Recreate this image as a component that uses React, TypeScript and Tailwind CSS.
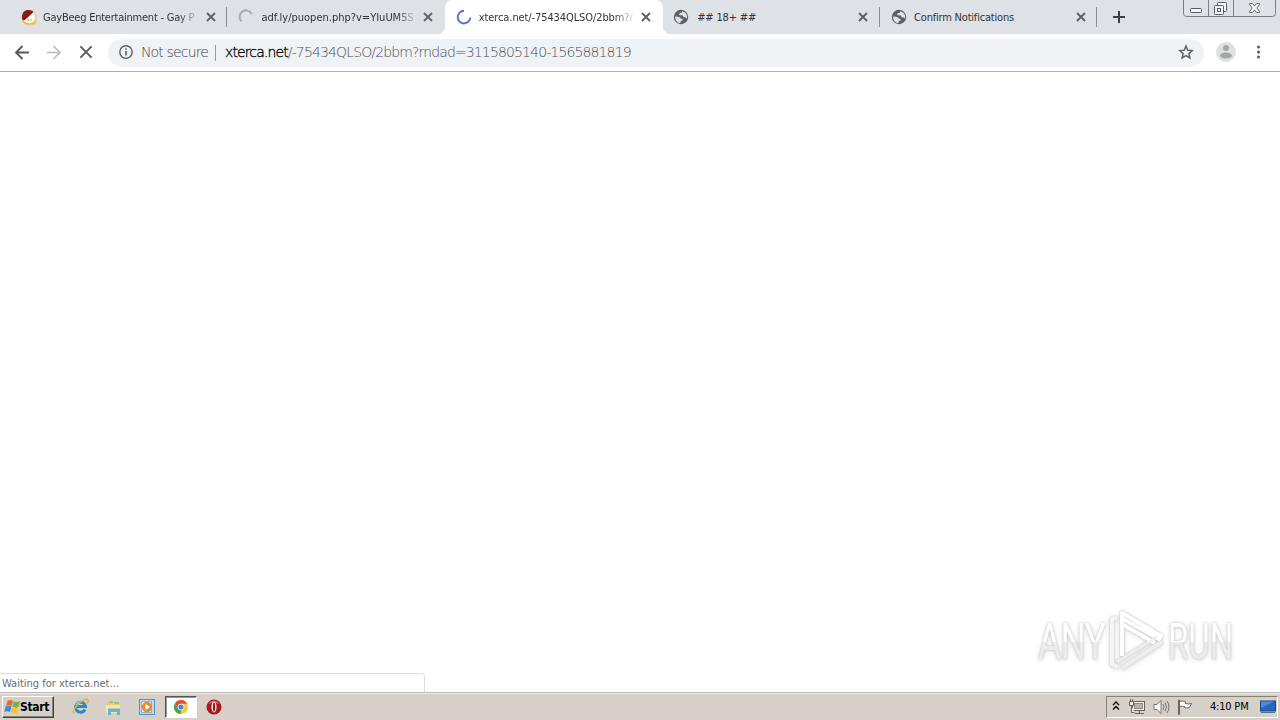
import type { ReactNode } from 'react'
import clsx from 'clsx'

const tabs = [
  { title: 'GayBeeg Entertainment - Gay P', icon: <CapIcon />, fade: true, track: 'tracking-[-0.23px] -ml-px' },
  { title: 'adf.ly/puopen.php?v=YIuUM5S', icon: <Spinner color="#a9abae" arc="M3.5 12.2A6.3 6.3 0 1 1 13.600 5" />, fade: true, track: 'tracking-[0px]' },
  { title: 'xterca.net/-75434QLSO/2bbm?r', icon: <Spinner color="#5673d0" arc="M8 1.8A6.3 6.3 0 1 0 14.3 8.6" />, fade: true, active: true, track: 'tracking-[-0.1px]' },
  { title: '## 18+ ##', icon: <GlobeIcon />, track: 'tracking-[-0.15px] pl-px' },
  { title: 'Confirm Notifications', icon: <GlobeIcon />, track: 'tracking-[-0.2px] pl-[0.5px]' },
]

function Spinner({ color, arc }: { color: string; arc: string }) {
  return (
    <svg width="16" height="16" viewBox="0 0 16 16" fill="none" stroke={color} strokeWidth="2">
      <path d={arc} />
    </svg>
  )
}

function CapIcon() {
  return (
    <svg width="16" height="16" viewBox="0 0 16 16">
      <path d="M6 1h6l3.500 5v7.500q0 2-2 2H3z" fill="#f3c765" />
      <circle cx="7.500" cy="8" r="6.600" fill="#fff0ce" />
      <path d="M1.500 11.500C-.5 5 3 1 7.500 1q3.500 0 5 2L4 11z" fill="#861a1c" />
      <path d="M3.500 11.500L13 4q2.500 4-.5 8-4.500 2.500-9-.5" fill="#fff" />
      <path d="M1.500 11q1.500 4 6 4l6-.5" fill="none" stroke="#f1bb4d" strokeWidth="1.600" />
      <path d="M7 11h1.200M9.500 11h1.200" stroke="#8e5151" />
    </svg>
  )
}

function GlobeIcon() {
  return (
    <svg width="16" height="16" viewBox="0 0 16 16">
      <circle cx="8" cy="8" r="7.200" fill="#5c6066" />
      <path d="M2.300 7.300l4.500 1 1.200 1.500H9.500v1.600l-2 1v1.700C4 14 1.700 11 2.300 7.300z" fill="#dee1e6" />
      <path d="M9 2.300v1.200L6.300 4.600v1.600H9.500l1.200 2h1.500l1.800 1.300c.7-3-1-6.500-5-7.200z" fill="#dee1e6" />
    </svg>
  )
}

function Cross({ size, stroke, width }: { size: number; stroke: string; width: number }) {
  return (
    <svg width={size} height={size} viewBox="0 0 10 10" fill="none" stroke={stroke} strokeWidth={width}>
      <path d="M1 1l8 8M9 1L1 9" />
    </svg>
  )
}

function TabStrip() {
  return (
    <div className="relative flex h-[34px] bg-[#dee1e6] pl-[10px]">
      {tabs.map((tab, i) => (
        <div
          key={tab.title}
          className={clsx(
            'relative flex h-[34px] w-[217.4px] shrink-0 items-center pl-[11px]',
            tab.active && 'rounded-t-lg bg-white shadow-[1px_0_0_#fff]',
          )}
        >
          <div className="w-4 shrink-0">{tab.icon}</div>
          <div className="ml-[7px] w-[154px]">
            <div
              className={clsx(
                'w-[154px] whitespace-nowrap pt-px text-[11px] leading-4 text-[#303338]',
                tab.track,
                tab.fade && '[mask-image:linear-gradient(to_right,#000_88%,transparent_102%)]',
              )}
            >
              {tab.title}
            </div>
          </div>
          <div className="ml-[8px]">
            <Cross size={10} stroke="#5f6368" width={1.9} />
          </div>
          {i !== 1 && i !== 2 && <div className="absolute right-0 top-[7px] h-5 w-px bg-[#8b8f95]" />}
          {tab.active && (
            <>
              <div className="absolute -left-2 bottom-0 size-2 bg-[radial-gradient(circle_at_0_0,transparent_8px,#fff_8.500px)]" />
              <div className="absolute -right-[9px] bottom-0 size-2 bg-[radial-gradient(circle_at_100%_0,transparent_8px,#fff_8.500px)]" />
            </>
          )}
        </div>
      ))}
      <svg className="ml-[16px] mt-[11px]" width="12" height="12" viewBox="0 0 12 12">
        <path d="M6 0v12M0 6h12" stroke="#3c4045" strokeWidth="2" />
      </svg>
      <WindowButtons />
    </div>
  )
}

function WindowButtons() {
  return (
    <svg className="absolute left-[1183px] top-0" width="94" height="18" fill="none" stroke="#7b7f88">
      <path d="M.5 0v13.500q0 3 3 3h86q3 0 3-3V0M25.500 0v16M50.500 0v16" />
      <rect x="7.500" y="8.500" width="11" height="4" rx="1" fill="#f4f5f7" stroke="#555a65" />
      <g stroke="#555a65" fill="#f4f5f7">
        <rect x="34.500" y="2.500" width="9" height="9" rx="1" />
        <rect x="31.500" y="5.500" width="9" height="9" rx="1" />
        <rect x="34.500" y="8.500" width="3" height="3" />
        <path d="M66.500 3.500h3l2 2.500 2-2.500h3v1l-2.700 3.500 2.700 3.500v1h-3l-2-2.500-2 2.500h-3v-1l2.700-3.500-2.700-3.500z" strokeWidth=".9" />
      </g>
    </svg>
  )
}

function Toolbar() {
  return (
    <div className="flex h-[38px] items-center border-b border-[#afafaf] bg-white pl-[14px]">
      <svg width="16" height="16" viewBox="0 0 16 16" fill="none" stroke="#55585c" strokeWidth="1.800">
        <path d="M15 7.500H2M8.500 1L2 7.500 8.500 14" />
      </svg>
      <svg className="ml-4" width="16" height="16" viewBox="0 0 16 16" fill="none" stroke="#b9bbbd" strokeWidth="1.600">
        <path d="M1 7.500h13M7.500 1L14 7.500 7.500 14" />
      </svg>
      <div className="mb-px ml-[17px]">
        <Cross size={14} stroke="#55585c" width={1.3} />
      </div>
      <div className="ml-[15px] flex h-7 w-[1096px] items-center rounded-full bg-[#f0f3f5] pl-[11px] font-['DejaVu_Sans_Light','DejaVu_Sans'] text-[14px] font-extralight">
        <svg className="mb-px" width="14" height="14" viewBox="0 0 14 14" fill="none" stroke="#5f6368" strokeWidth="1.400">
          <circle cx="7" cy="7" r="6.200" />
          <path d="M7 6v4.500M7 3.300v1.500" strokeWidth="1.600" />
        </svg>
        <span className="ml-2 w-[68px] whitespace-nowrap tracking-[-0.85px] text-[#3c4045]">Not secure</span>
        <div className="ml-[6px] h-4 w-px bg-[#96999c]" />
        <span className="ml-[9px] whitespace-nowrap tracking-[-0.87px] text-[#4c5055]">
          <span className="text-black [-webkit-text-stroke:0.3px_#000]">xterca.net</span>/-75434QLSO/2bbm?rndad=3115805140-1565881819
        </span>
        <svg className="mb-px ml-auto mr-[10px]" width="16" height="16" viewBox="0 0 16 16" fill="none" stroke="#5f6368" strokeWidth="1.500">
          <path d="M8 2l1.800 4.200 4.500.4-3.400 3 1 4.400L8 11.700 4.100 14l1-4.400-3.400-3 4.500-.4z" />
        </svg>
      </div>
      <svg className="mb-[2px] ml-3" width="20" height="20" viewBox="0 0 20 20">
        <circle cx="10" cy="10" r="10" fill="#dfe0e1" />
        <circle cx="10" cy="6" r="3" fill="#a4a5a7" />
        <ellipse cx="10" cy="13.500" rx="6" ry="3" fill="#a4a5a7" />
      </svg>
      <svg className="mb-px ml-5" width="5" height="14" viewBox="0 0 5 14" fill="#55585c">
        <circle cx="2.500" cy="2" r="1.500" />
        <circle cx="2.500" cy="7" r="1.500" />
        <circle cx="2.500" cy="12" r="1.500" />
      </svg>
    </div>
  )
}

function Watermark() {
  return (
    <div className="absolute left-[1038px] top-[609px] flex h-16 w-[200px] items-center [filter:drop-shadow(0_0_1px_#c4c4c4)_drop-shadow(0_1px_2px_#ddd)]">
      <div className="w-[70px] pt-[2px]">
        <span className="inline-block origin-left scale-x-[0.71] bg-[linear-gradient(#fff_50%,#ececec_50%)] bg-clip-text font-['Roboto'] text-[50px] leading-[60px] tracking-[-1px] text-transparent">
          ANY
        </span>
      </div>
      <svg className="shrink-0" width="58" height="64" viewBox="0 0 58 64" fill="none" stroke="#fff" strokeWidth="4" strokeLinejoin="round">
        <path d="M9 9L4 10v45l6 3" stroke="#f5f5f5" />
        <path d="M14 47V4l39 23-2 3-36-20" />
        <path d="M14 15l33 19" />
        <path d="M14 59l40-26" stroke="#eee" />
        <path d="M9 53l40-25" stroke="#eee" strokeWidth="3" />
      </svg>
      <div className="ml-[2px] w-[66px] pt-[2px]">
        <span className="inline-block origin-left scale-x-[0.66] bg-[linear-gradient(#fff_50%,#ececec_50%)] bg-clip-text font-['Roboto'] text-[50px] leading-[60px] text-transparent">
          RUN
        </span>
      </div>
    </div>
  )
}

function ChromeIcon() {
  return (
    <svg width="16" height="16" viewBox="0 0 16 16">
      <circle cx="8" cy="8" r="7" fill="#fbc83c" />
      <path d="M2 4.300A7 7 0 0 1 14.200 4.700H8L5 9.500z" fill="#e04b3b" />
      <path d="M1.900 4.400L5 9.700l3.300 1.700L7.500 15A7 7 0 0 1 1.900 4.400" fill="#45a359" />
      <circle cx="8" cy="8" r="3.300" fill="#fff" />
      <circle cx="8" cy="8" r="2.600" fill="#4688df" />
    </svg>
  )
}

function StartButton() {
  return (
    <button className="ml-[2px] flex h-[22px] w-[52px] items-center border border-t-white border-l-white border-r-[#404040] border-b-[#404040] bg-[#d6d0c8] pl-px shadow-[inset_-1px_-1px_0_#85817b]">
      <svg className="shrink-0" width="17" height="17" viewBox="0 0 17 17">
        <path d="M3.500 3q3-2 5.500 0L7.700 8q-2.500-1.500-5.700 0z" fill="#ec6a32" />
        <path d="M9.500 3.300q3 1.500 6.500 0L14.500 9q-3 1.200-6-.5z" fill="#72b448" />
        <path d="M1.700 8.600q3-1.500 5.700 0L6 14q-3-1.500-5.700 0z" fill="#4388d4" />
        <path d="M8 9q3 1.500 6.300.3L13 15q-3 1.500-6-.5z" fill="#f6c235" />
      </svg>
      <span className="-ml-px text-[12px] font-bold tracking-[-0.3px] text-black">Start</span>
    </button>
  )
}

function QuickItem({ pressed, children }: { pressed?: boolean; children: ReactNode }) {
  return (
    <div
      className={clsx(
        'flex h-[22px] w-[32px] items-center justify-center',
        pressed && 'border border-[#55514c] border-r-white border-b-white bg-white shadow-[inset_1px_1px_0_#999]',
      )}
    >
      {children}
    </div>
  )
}

function Taskbar() {
  return (
    <div className="flex h-[28px] items-center border-t border-[#bdbab5] bg-[#d6d0c8] shadow-[inset_0_1px_0_#eeeae5]">
      <StartButton />
      <div className="ml-[10px] flex gap-[1.600px]">
        <QuickItem>
          <svg width="17" height="17" viewBox="0 0 17 17" fill="none">
            <path d="M13 11.500A5 5 0 1 1 13.500 8.500H4.500" stroke="#298bc9" strokeWidth="3" />
            <path d="M4 7.500q1-3 4.500-3.500" stroke="#8ed6f4" strokeWidth="1.300" />
            <path d="M2 15.500C-1 12 11-.5 15.500 1.500q1.500 1-.5 4" stroke="#dfb43d" strokeWidth="1.500" />
          </svg>
        </QuickItem>
        <QuickItem>
          <svg width="17" height="16" viewBox="0 0 17 16">
            <path d="M2 2h5l1 2h7v10H2z" fill="#e9cf71" />
            <path d="M4 3h4M9 4h5" stroke="#6bad6d" />
            <path d="M1 6h14v8H1z" fill="#f8e89f" />
            <path d="M3 16V9.500h12V16h-3v-3H6V16z" fill="#69b2df" />
          </svg>
        </QuickItem>
        <QuickItem>
          <svg width="16" height="16" viewBox="0 0 16 16">
            <rect x=".5" y=".5" width="15" height="15" fill="#b9dbf3" stroke="#4f93cc" />
            <rect x="2.500" y="2.500" width="10" height="11" fill="#e9f4fb" stroke="#7fb4dd" />
            <circle cx="8" cy="8" r="5.200" fill="#ed8b28" />
            <path d="M6.500 5v6l4.500-3z" fill="#fff" />
          </svg>
        </QuickItem>
        <QuickItem pressed>
          <ChromeIcon />
        </QuickItem>
        <QuickItem>
          <svg width="16" height="16" viewBox="0 0 16 16">
            <circle cx="8" cy="8" r="7.500" fill="#ac171c" />
            <path d="M2 5q6-7 12 0-6-2-12 0" fill="#db6868" />
            <ellipse cx="8" cy="8" rx="2.600" ry="5.400" fill="#e9e1de" />
            <ellipse cx="8" cy="8" rx="1" ry="4.600" fill="#851015" />
          </svg>
        </QuickItem>
      </div>
      <div className="ml-auto mr-[2px] flex h-[22px] w-[172px] items-center border border-[#85817b] border-r-white border-b-white pl-[5px]">
        <svg className="mb-[2px]" width="8" height="10" viewBox="0 0 8 10" fill="none" stroke="#000" strokeWidth="1.300">
          <path d="M1 4l3-3 3 3M1 8.500l3-3 3 3" />
        </svg>
        <svg className="ml-[9px]" width="17" height="16" viewBox="0 0 17 16" fill="#f4f2ef" stroke="#65625f">
          <rect x="3.500" y="2.500" width="12" height="9" />
          <rect x="5.500" y="4.500" width="8" height="5" fill="#b7b5b2" stroke="#8d8a86" />
          <path d="M6 14.500h9M10.500 12v2M.5 2.500h4v4h-4zM1.500 0v2M3.500 0v2M2.500 7v6.500h3" />
        </svg>
        <svg className="ml-[7px]" width="17" height="16" viewBox="0 0 17 16" fill="#fff" stroke="#777470">
          <path d="M1 5.500h3l4-4v13l-4-4H1z" />
          <path d="M10 5q2 3 0 6M12 3.500q3 4.500 0 9M14 2q4 6 0 12" fill="none" />
        </svg>
        <svg className="ml-[7px]" width="17" height="16" viewBox="0 0 17 16" fill="#fff" stroke="#666360">
          <path d="M1.500 1v14.500h1V1zM2.500 2.500q3-1 6 0v2q3 1 6 0l-2 4q-3 1-5 0v-1q-2-.5-5 0z" />
        </svg>
        <span className="ml-[16px] w-[40px] whitespace-nowrap pt-[2px] text-[11px] tracking-[-0.2px] text-black">4:10 PM</span>
        <svg className="ml-[10px]" width="16" height="14" viewBox="0 0 16 14">
          <rect x=".5" y="1" width="15" height="10" fill="#2467bd" stroke="#174986" />
          <path d="M1 1.500h13L1 8z" fill="#498ce0" />
          <path d="M1 12.500h14" stroke="#54708f" />
        </svg>
      </div>
    </div>
  )
}

export default function App() {
  return (
    <div className="relative flex h-[720px] w-[1280px] flex-col overflow-hidden bg-white font-['DejaVu_Sans_Condensed','DejaVu_Sans',sans-serif]">
      <TabStrip />
      <Toolbar />
      <main className="flex flex-1 items-end">
        <div className="flex h-[19px] w-[425px] items-center rounded-tr border-t border-r border-[#dedede] pl-[2px] pt-[2px] text-[11px] tracking-[0px] text-[#6b6b6b]">
          Waiting for xterca.net...
        </div>
      </main>
      <Taskbar />
      <Watermark />
    </div>
  )
}
